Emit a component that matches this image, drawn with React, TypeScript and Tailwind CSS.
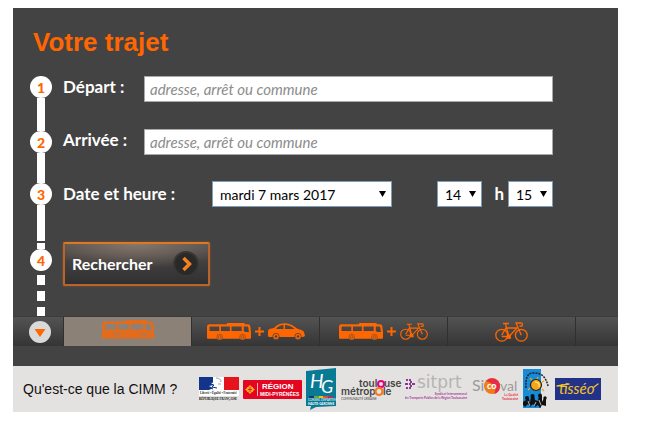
import type { ReactNode } from 'react';
import { useState } from 'react';

const ORANGE = '#ff6600';

// ─── Icons ────────────────────────────────────────────────────────────────────

const Bus = ({ className, fill = ORANGE, line = '#444444' }: { className: string; fill?: string; line?: string }) => (
  <svg viewBox="0 0 52 20" className={className} aria-hidden="true">
    <path
      fill={fill}
      fillRule="evenodd"
      d="M3 1.500H23L24 0H44L45 1.500H48.500Q51 1.500 51.300 4L52 11V17Q52 18.500 51 18.500H1Q0 18.500 0 17V4Q0 1.500 3 1.500Z
         M4 4Q3 4 3 5V9.500H14.500V4ZM16.500 4V9.500H27V4ZM29 4V9.500H41V4ZM43.500 4V9L45 10.500H49.500L48.700 5Q48.500 4 48 4Z"
    />
    {[15, 42].map((x) => (
      <g key={x}>
        <circle cx={x} cy="16.500" r="3.500" fill={fill} stroke={line} strokeWidth="0.500" />
        <circle cx={x} cy="16.500" r="1.700" fill="none" stroke={line} strokeWidth="0.600" />
      </g>
    ))}
  </svg>
);

const Car = ({ className }: { className: string }) => (
  <svg viewBox="0 0 37 17" className={className} aria-hidden="true">
    <path
      fill={ORANGE}
      fillRule="evenodd"
      d="M1 6L6 5Q9 1 14 0.500Q20 -0.300 24 2L30 6Q35 7 36 9L37 13L35 14H1Q0 14 0 12V8Z
         M8 6H15.500V2Q11 2 8 6ZM17 2V6H26.500Q22 2 17 2Z"
    />
    {[8, 30].map((x) => (
      <g key={x}>
        <circle cx={x} cy="13.500" r="3.200" fill={ORANGE} stroke="#444444" strokeWidth="0.800" />
        <circle cx={x} cy="13.500" r="1.300" fill="#444444" />
      </g>
    ))}
  </svg>
);

const Bike = ({ className }: { className: string }) => (
  <svg viewBox="0 0 33 20" className={className} fill="none" stroke={ORANGE} strokeWidth="1.300" aria-hidden="true">
    <circle cx="6.700" cy="13.200" r="5.900" />
    <circle cx="26.300" cy="13.200" r="5.900" />
    <path d="M6.700 13.200L11 6H22L14 14.500H6.700M14 14.500L10.500 2M8 1.500H14M26.300 13.200L21 1H26.500Q28 1.500 27 4H24.500M12 16H16" />
    <circle cx="14" cy="14.500" r="1.300" fill={ORANGE} />
  </svg>
);

const Plus = () => (
  <svg viewBox="0 0 9 9" className="h-[9px] w-[9px]" stroke={ORANGE} strokeWidth="2" aria-hidden="true">
    <path d="M4.500 0V9M0 4.500H9" />
  </svg>
);

const Caret = () => (
  <svg viewBox="0 0 7 6" className="pointer-events-none absolute right-[6px] top-[10px] h-[6px] w-[7px]" aria-hidden="true">
    <path d="M0 0H7L3.500 6Z" fill="#000000" />
  </svg>
);

// ─── Partner logos ────────────────────────────────────────────────────────────

const Republique = () => (
  <svg viewBox="0 0 41 24" className="h-[24px] w-[41px]" role="img" aria-label="République Française">
    <rect width="40" height="19" fill="#ffffff" />
    <rect width="14" height="13" fill="#14348c" />
    <rect x="25" width="15" height="13" fill="#e5141c" />
    <path d="M14 0Q20 0 22 3L24 6L22 7L23 9L20 10L25 13H10L14 11L10 9L15 8L12 6L17 5Z" fill="#ffffff" />
    <path d="M10 7L15 8L13 10L18 11M9 10L14 12" stroke="#14348c" strokeWidth="1" fill="none" />
    <path d="M17 1Q22 1 22 5M19 7L22 7" stroke="#9aa2b5" strokeWidth="1" fill="none" />
    <text x="1" y="17" fontFamily="Liberation Serif, serif" fontSize="3" fontWeight="700" fill="#222222">Liberté • Égalité • Fraternité</text>
    <text x="0" y="23" fontFamily="Liberation Serif, serif" fontSize="3" fontWeight="700" fill="#000000">RÉPUBLIQUE FRANÇAISE</text>
  </svg>
);

const Region = () => (
  <svg viewBox="0 0 60 19" className="h-[19px] w-[60px]" role="img" aria-label="Région Midi-Pyrénées">
    <rect width="59" height="19" rx="1" fill="#e40521" />
    <path d="M7 5L9 7H10V8L12 9.500L10 11V12H9L7 14L5 12H4V11L2 9.500L4 8V7H5Z" fill="#f6a81c" />
    <path d="M7 7V12M5 9.500H9" stroke="#e40521" strokeWidth="0.800" />
    <path d="M14.500 3V16" stroke="#ffffff" strokeWidth="0.700" />
    <text x="19" y="9" fontFamily="Liberation Sans, sans-serif" fontSize="8" fontWeight="700" fill="#ffffff">RÉGION</text>
    <text x="17" y="16" fontFamily="Liberation Sans, sans-serif" fontSize="5" fontWeight="700" fill="#ffffff">MIDI-PYRÉNÉES</text>
  </svg>
);

const HauteGaronne = () => (
  <svg viewBox="0 0 32 42" className="h-[42px] w-[32px]" role="img" aria-label="Haute-Garonne">
    <path d="M0 3L30 0V38L10 39L4 42L5 38H0Z" fill="#087a93" />
    <g fontFamily="Lato, sans-serif" fontStyle="italic" fill="#ffffff">
      <text x="4" y="20" fontSize="19">H</text>
      <text x="15" y="25" fontSize="18">G</text>
    </g>
    <path d="M3 29H8" stroke="#1a3475" strokeWidth="2" />
    <path d="M8 29H13" stroke="#61ac45" strokeWidth="2" />
    <path d="M13 29H17" stroke="#f2bd22" strokeWidth="2" />
    <path d="M17 29H22" stroke="#e84830" strokeWidth="2" />
    <path d="M22 29H27" stroke="#b42b68" strokeWidth="2" />
    <text x="2" y="33" fontFamily="Lato, sans-serif" fontSize="3" fill="#ffffff">CONSEIL DÉPARTEM.</text>
    <text x="2" y="37" fontFamily="Lato, sans-serif" fontSize="3" fontWeight="700" fill="#ffffff">HAUTE-GARONNE</text>
  </svg>
);

const Toulouse = () => (
  <svg viewBox="0 -2 61 25" className="h-[25px] w-[61px]" role="img" aria-label="Toulouse Métropole">
    <g fontFamily="Inter, sans-serif" fontSize="10" fontWeight="600" fill="#444444">
      <text x="18" y="8">toul</text>
      <text x="43" y="8">use</text>
      <text x="0" y="16">métrop</text>
      <text x="42" y="16">le</text>
    </g>
    <circle cx="40" cy="5" r="3" fill="none" stroke="#e60082" strokeWidth="2" />
    <circle cx="38" cy="12.500" r="3.500" fill="none" stroke="#f47b20" strokeWidth="2.200" />
    <text x="0" y="21" fontFamily="Lato, sans-serif" fontSize="3" fill="#444444">COMMUNAUTÉ URBAINE</text>
  </svg>
);

const Sitprt = () => (
  <svg viewBox="0 -6 64 34" className="h-[34px] w-[64px]" role="img" aria-label="sitprt">
    <path d="M1 2H3M4 2H6M5 4H7M0 6H3M4 6H6M7 6H10M5 8H7M1 10H3M4 10H6" stroke="#8c3a92" strokeWidth="2" />
    <text x="12" y="10" fontFamily="DejaVu Sans, sans-serif" fontSize="17" fill="#b4b4b4">sitprt</text>
    <text x="62" y="17" textAnchor="end" fontFamily="Lato, sans-serif" fontSize="3" fontWeight="700" fill="#a5409c">Syndicat Intercommunal</text>
    <text x="62" y="21" textAnchor="end" fontFamily="Lato, sans-serif" fontSize="3" fontWeight="700" fill="#a5409c">des Transports Publics de la Région Toulousaine</text>
  </svg>
);

const Sicoval = () => (
  <svg viewBox="0 0 47 26" className="h-[26px] w-[47px]" role="img" aria-label="Sicoval">
    <g fontFamily="Lato, sans-serif" fill="#9b9b9b">
      <text x="0" y="15" fontSize="16">Si</text>
      <text x="28" y="15" fontSize="14">val</text>
    </g>
    <circle cx="20" cy="10" r="8" fill="#ee7d18" />
    <path d="M14 5A8 8 0 0 1 28 10A8 8 0 0 1 22 18Q27 9 14 5Z" fill="#e52c48" />
    <text x="15" y="13" fontFamily="Lato, sans-serif" fontSize="9" fontWeight="900" fill="#ffffff">co</text>
    <text x="46" y="20" textAnchor="end" fontFamily="Lato, sans-serif" fontSize="3" fontWeight="700" fill="#e52c48">La Qualité</text>
    <text x="46" y="24" textAnchor="end" fontFamily="Lato, sans-serif" fontSize="3" fontWeight="700" fill="#e52c48">Toulousaine</text>
  </svg>
);

const Muretain = () => (
  <svg viewBox="0 0 30 42" className="h-[42px] w-[30px]" role="img" aria-label="Communauté">
    <rect x="1" y="1" width="18" height="39" fill="#168bd8" />
    <path d="M4 20Q3 5 11 5Q23 4 26 18" fill="none" stroke="#222222" strokeWidth="1.500" strokeDasharray="2 1" />
    <path d="M8 10L10 12M16 9L15 11M6 22L8 20M22 23L20 21M22 13L20 14" stroke="#f6a01d" strokeWidth="1.300" />
    <circle cx="14" cy="17" r="5.500" fill="#f9a51a" stroke="#222222" strokeWidth="1.200" />
    <path d="M13 14Q18 14 17 19" stroke="#ffe36e" strokeWidth="1.500" fill="none" />
    <path d="M1 37V34L4 32L5 29L7 31L8 35L9 28L12 27L13 32L16 33L17 27L20 28V34L22 30L24 31V38L20 37L18 40L16 37L13 39L11 36L8 39L6 36L3 39Z" fill="#111111" />
    <g fill="#111111">
      <circle cx="5" cy="30" r="2" />
      <circle cx="10.500" cy="28" r="2" />
      <circle cx="18" cy="27.500" r="2" />
      <circle cx="23" cy="30" r="1.700" />
    </g>
    <path d="M6 33L8 38M14 34L12 38M17 32L19 37" stroke="#ffffff" strokeWidth="0.700" />
  </svg>
);

const Tisseo = () => (
  <svg viewBox="0 0 46 22" className="h-[22px] w-[46px]" role="img" aria-label="tisséo">
    <rect width="46" height="22" fill="#233289" />
    <text x="4" y="16" fontFamily="Lato, sans-serif" fontSize="15" fontStyle="italic" fill="#f7c51d">
      tisséo
    </text>
    <path d="M2 8L14 6M39 9L43 6" stroke="#f7c51d" strokeWidth="1.300" strokeLinecap="round" />
  </svg>
);

// ─── Journey rail ─────────────────────────────────────────────────────────────

const Step = ({ n }: { n: number }) => (
  <li className="flex h-[22px] w-[22px] shrink-0 items-center justify-center rounded-full bg-white text-[14px] font-black text-[#ff6600]">
    {n}
  </li>
);

const Rail = () => (
  <ol className="ml-[17px] flex w-[22px] shrink-0 flex-col items-center" aria-label="Étapes">
    <Step n={1} />
    <li className="h-[33px] w-[8px] bg-white" />
    <Step n={2} />
    <li className="h-[30px] w-[8px] bg-white" />
    <Step n={3} />
    <li className="h-[36px] w-[8px] bg-white" />
    <li className="mt-[2px] h-[6px] w-[8px] bg-white" />
    <Step n={4} />
    <li className="mt-[4px] h-[10px] w-[8px] bg-white" />
    <li className="mt-[6px] h-[10px] w-[8px] bg-white" />
    <li className="mt-[6px] h-[9px] w-[8px] bg-white" />
  </ol>
);

// ─── Form controls ────────────────────────────────────────────────────────────

const PlaceField = ({ id, label }: { id: string; label: string }) => (
  <div className="flex">
    <label htmlFor={id} className="w-[81px] shrink-0 text-[17px] leading-[22px] font-bold text-white">
      {label}
    </label>
    <input
      id={id}
      type="text"
      placeholder="adresse, arrêt ou commune"
      className="h-[26px] min-w-0 flex-1 border border-[#a9a9a9] bg-white px-[5px] text-[15px] text-black placeholder:text-[#8c8c8c] placeholder:italic"
    />
  </div>
);

const Select = ({ id, label, options, className }: { id: string; label?: string; options: string[]; className: string }) => (
  <div className={`relative shrink-0 ${className}`}>
    <select
      id={id}
      aria-label={label}
      className="h-[26px] w-full appearance-none border border-[#7f9db9] bg-white px-[7px] text-[14px] text-black"
    >
      {options.map((o) => (
        <option key={o}>{o}</option>
      ))}
    </select>
    <Caret />
  </div>
);

// ─── Transport modes ──────────────────────────────────────────────────────────

const MODES: { label: string; icon: ReactNode }[] = [
  { label: 'Bus', icon: <Bus className="mb-[3px] h-[20px] w-[52px]" fill="#e36c1c" line="#8b8176" /> },
  {
    label: 'Bus et voiture',
    icon: (
      <>
        <Bus className="h-[17px] w-[44px]" />
        <Plus />
        <Car className="h-[17px] w-[37px]" />
      </>
    ),
  },
  {
    label: 'Bus et vélo',
    icon: (
      <>
        <Bus className="h-[17px] w-[44px]" />
        <Plus />
        <Bike className="h-[17px] w-[28px]" />
      </>
    ),
  },
  { label: 'Vélo', icon: <Bike className="h-[20px] w-[33px]" /> },
];

const ModeBar = () => {
  const [active, setActive] = useState(0);

  return (
    <nav className="flex h-[30px] border-t border-[#3c3c3c] bg-linear-to-b from-[#535353] to-[#353535]">
      <div className="flex w-[51px] shrink-0 items-center border-r border-[#303030] pl-[16px]">
        <svg viewBox="0 0 22 22" className="h-[22px] w-[22px]" aria-hidden="true">
          <circle cx="11" cy="11" r="11" fill="#d9d9d9" />
          <path d="M5.500 8H16.500L11 16Z" fill={ORANGE} />
        </svg>
      </div>
      {MODES.map((mode, i) => (
        <button
          key={mode.label}
          type="button"
          aria-label={mode.label}
          aria-pressed={i === active}
          onClick={() => setActive(i)}
          className={`flex w-[128px] shrink-0 items-center justify-center gap-[4px] border-r border-[#303030] ${i === active ? 'bg-[#8b8176]' : ''}`}
        >
          {mode.icon}
        </button>
      ))}
    </nav>
  );
};

// ─── App ──────────────────────────────────────────────────────────────────────

const App = () => (
  <main className="mt-2 mr-[33px] ml-[13px] bg-[#434343] font-['Lato',sans-serif]">
    <h1 className="px-5 pt-[17px] pb-[10px] font-['Liberation_Sans',Arial,sans-serif] text-[26px] leading-[34px] font-bold text-[#ff6600]">
      Votre trajet
    </h1>

    <div className="mt-[7px] flex">
      <Rail />
      <form className="mr-[65px] ml-[11px] min-w-0 flex-1" onSubmit={(e) => e.preventDefault()}>
        <PlaceField id="depart" label="Départ :" />
        <div className="mt-[27px]">
          <PlaceField id="arrivee" label="Arrivée :" />
        </div>

        <div className="mt-[26px] flex items-center">
          <label htmlFor="date" className="w-[149px] shrink-0 text-[17px] font-bold text-white">
            Date et heure :
          </label>
          <Select id="date" options={['mardi 7 mars 2017', 'mercredi 8 mars 2017']} className="w-[180px]" />
          <div className="ml-auto flex items-center">
            <Select id="heure" label="Heure" options={['14', '15', '16']} className="w-[45px]" />
            <label htmlFor="minutes" className="w-[26px] pr-[4px] text-right text-[17px] font-bold text-white">
              h
            </label>
            <Select id="minutes" options={['15', '30', '45']} className="w-[45px]" />
          </div>
        </div>

        <button
          type="submit"
          className="mt-[35px] flex h-[44px] w-[147px] items-center justify-between rounded-xs border-2 border-[#b9642b] border-t-[#dc7826] bg-[radial-gradient(ellipse_70%_60%_at_50%_0%,#85776c,transparent),linear-gradient(#514c49,#303032)] pr-[9px] pl-[7px] text-[16px] font-bold text-white shadow-[0_0_2px_#a0582a]"
        >
          Rechercher
          <svg viewBox="0 0 26 26" className="h-[26px] w-[26px]" fill="none" aria-hidden="true">
            <circle cx="13" cy="13" r="12" fill="#292929" stroke="#383736" strokeWidth="2" />
            <path d="M10.500 7L16.500 13L10.500 19" stroke="#f58220" strokeWidth="3.500" />
          </svg>
        </button>
      </form>
    </div>

    <ModeBar />

    <footer className="mt-5 flex h-[46px] items-center bg-[#e4e2e0] pl-[10px] font-['Liberation_Sans',Arial,sans-serif]">
      <a href="#cimm" className="w-[176px] shrink-0 text-[14px] text-[#111111]">
        Qu'est-ce que la CIMM ?
      </a>
      <div className="flex items-center gap-[3px]">
        <Republique />
        <Region />
        <HauteGaronne />
        <Toulouse />
        <Sitprt />
        <Sicoval />
        <Muretain />
        <Tisseo />
      </div>
    </footer>
  </main>
);

export default App;
